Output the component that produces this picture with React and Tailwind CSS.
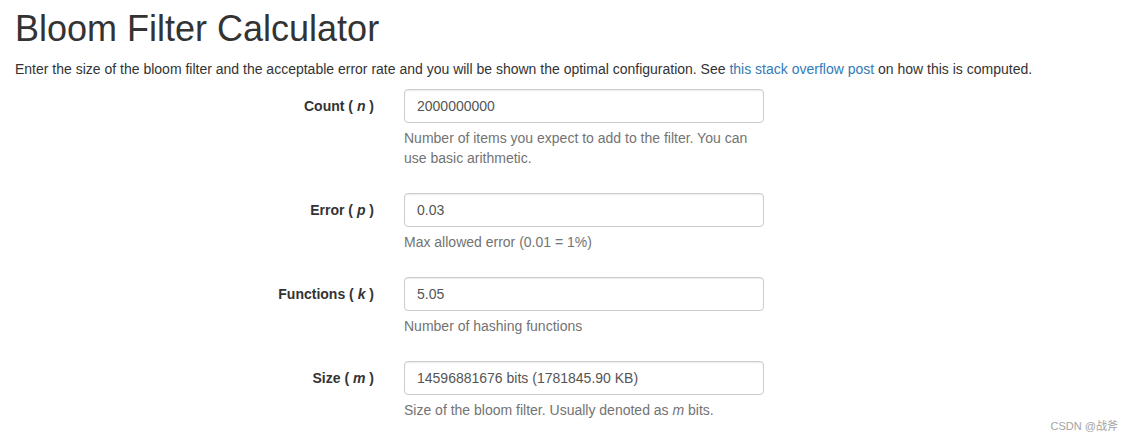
import React from "react";

const fields = [
  {
    label: "Count",
    sym: "n",
    value: "2000000000",
    help: (
      <>
        Number of items you expect to add to the filter. You can
        <br />
        use basic arithmetic.
      </>
    ),
  },
  { label: "Error", sym: "p", value: "0.03", help: "Max allowed error (0.01 = 1%)" },
  { label: "Functions", sym: "k", value: "5.05", help: "Number of hashing functions" },
  {
    label: "Size",
    sym: "m",
    value: "14596881676 bits (1781845.90 KB)",
    help: (
      <>
        Size of the bloom filter. Usually denoted as <i>m</i> bits.
      </>
    ),
  },
];

const App = () => {
  return (
    <div
      className="relative h-[442px] w-full overflow-hidden bg-white px-[15px] pt-[9px] text-[#333]"
      style={{ fontFamily: '"Liberation Sans", Arial, sans-serif' }}
    >
      <h1 className="mb-[10px] text-[36px] leading-[1.1] font-normal">Bloom Filter Calculator</h1>
      <p className="mb-[10px] text-[14px] leading-5">
        Enter the size of the bloom filter and the acceptable error rate and you will be shown the optimal
        configuration. See <a className="text-[#337ab7]">this stack overflow post</a> on how this is computed.
      </p>

      <form className="flex flex-col">
        {fields.map((f) => (
          <div key={f.label} className="mb-[15px] flex">
            <label className="w-[374px] shrink-0 pt-[7px] pr-[15px] text-right text-[14px] leading-5 font-bold">
              {f.label} ( <i>{f.sym}</i> )
            </label>
            <div className="w-[390px] px-[15px]">
              <input
                readOnly
                value={f.value}
                className="h-[34px] w-full rounded-[4px] border border-[#ccc] px-3 py-[6px] text-[14px] leading-5 text-[#555] shadow-[inset_0_1px_1px_rgba(0,0,0,0.075)] outline-none"
              />
              <span className="mt-[5px] mb-[10px] block text-[14px] leading-5 text-[#737373]">{f.help}</span>
            </div>
          </div>
        ))}
      </form>

      <div
        className="absolute right-[15px] bottom-[8px] text-[11px] text-[#a3a3a3]"
        style={{ fontFamily: '"Liberation Sans", "Noto Sans CJK SC", sans-serif' }}
      >
        CSDN @战斧
      </div>
    </div>
  );
};

export default App;
